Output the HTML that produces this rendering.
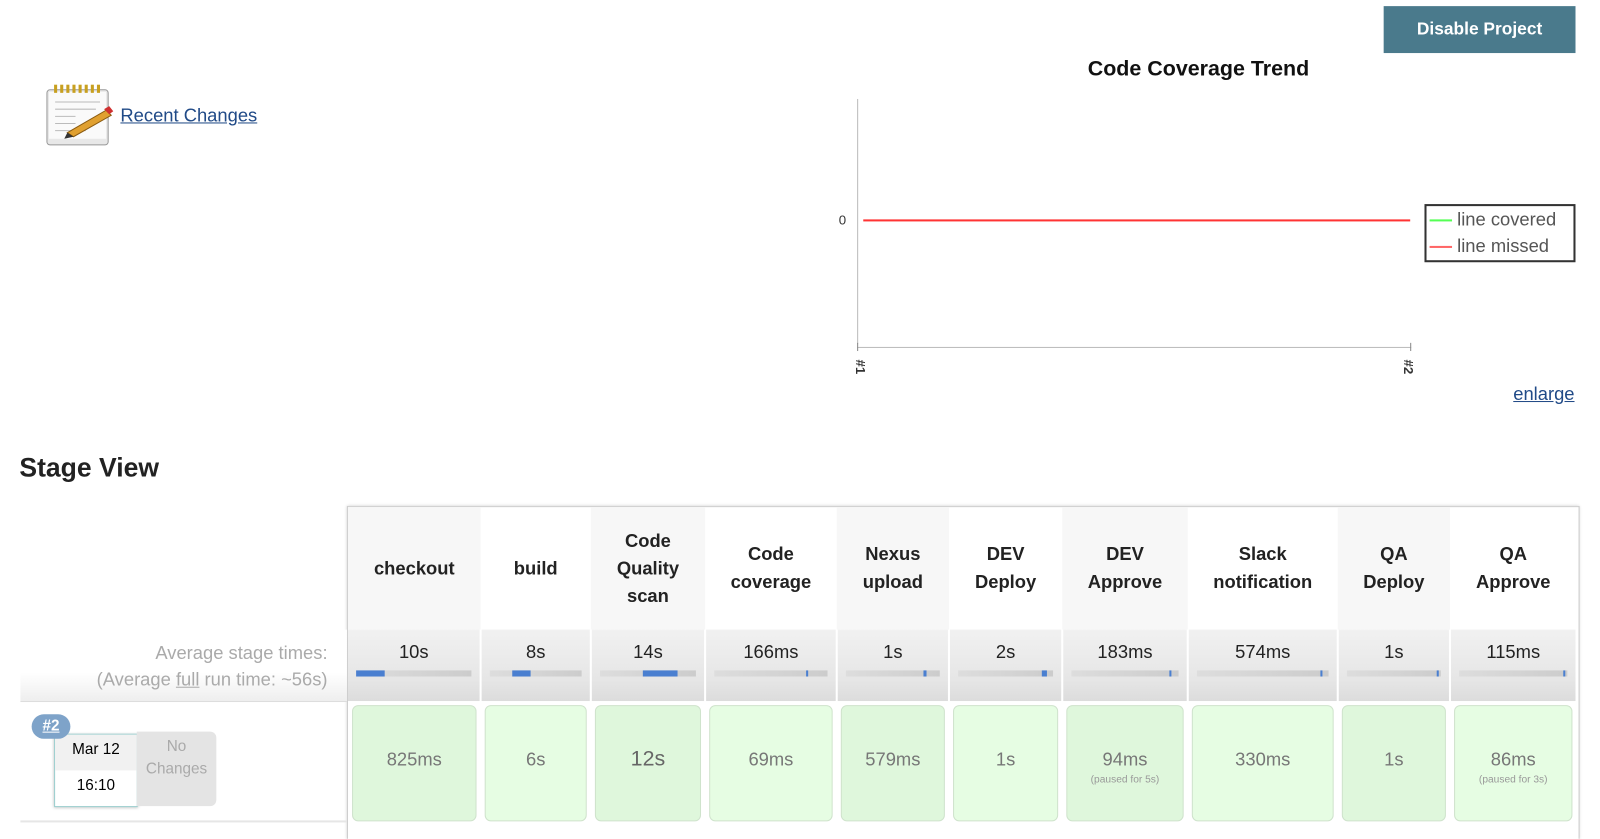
<!DOCTYPE html>
<html><head><style>
body{margin:0;width:1600px;height:821px;overflow:hidden;background:#fff;font-family:"Liberation Sans",Helvetica,Arial,sans-serif;position:relative}
#w{position:absolute;left:0;top:0;width:1568px;height:805px;transform:scale(1.0204);transform-origin:0 0}
.a{position:absolute}
.btn{left:1356px;top:6px;width:188px;height:46px;background:#4a7a8c;color:#fff;font-weight:bold;font-size:17px;line-height:46px;text-align:center}
a{color:#204a87;text-decoration:underline}
.hd{top:497px;height:120px;display:flex;align-items:center;justify-content:center;text-align:center;font-weight:bold;font-size:18px;line-height:27px;color:#222}
.av{top:617px;height:70px;background:linear-gradient(#f1f1f1,#e6e6e6 70%,#dcdcdc);text-align:center;font-size:18px;color:#222}
.av span{display:block;margin-top:12px}
.bar{position:absolute;left:8px;right:8px;top:40px;height:6px;background:linear-gradient(90deg,#ddd,#ccc)}
.bar i{position:absolute;top:0;height:6px;background:#4a7fd0}
.rw{top:687px;height:118px}
.c{position:absolute;left:4px;right:4px;top:4px;bottom:0;border:1px solid #cfe3cc;border-radius:6px;text-align:center;color:#777;font-size:18px}
.c b{font-weight:normal;display:block;margin-top:42px}
.c small{display:block;font-size:10px;color:#999;margin-top:4px}
</style></head><body><div id="w">
<div class="a btn">Disable Project</div>
<svg class="a" style="left:44px;top:80px" width="70" height="66" viewBox="0 0 70 66">
<rect x="2" y="8" width="60" height="54" rx="3" fill="#e8e8e8" stroke="#999"/>
<rect x="4" y="10" width="56" height="46" fill="#fafafa"/>
<g fill="#c8a020"><rect x="9" y="3" width="3" height="8"/><rect x="15" y="3" width="3" height="8"/><rect x="21" y="3" width="3" height="8"/><rect x="27" y="3" width="3" height="8"/><rect x="33" y="3" width="3" height="8"/><rect x="39" y="3" width="3" height="8"/><rect x="45" y="3" width="3" height="8"/><rect x="51" y="3" width="3" height="8"/></g>
<g stroke="#bbb"><line x1="10" y1="20" x2="54" y2="20"/><line x1="10" y1="27" x2="50" y2="27"/><line x1="10" y1="34" x2="30" y2="34"/><line x1="10" y1="41" x2="30" y2="41"/><line x1="10" y1="48" x2="40" y2="48"/></g>
<path d="M22 50 L60 28 L65 33 L28 54 Z" fill="#e0a030" stroke="#8a5a10"/>
<path d="M58 27 l5 -3 l4 5 l-4 3z" fill="#d03030"/>
<path d="M22 50 L28 54 L19 56Z" fill="#333"/>
</svg>
<a class="a" style="left:118px;top:103px;font-size:18px">Recent Changes</a>
<div class="a" style="left:1066px;top:56px;font-size:22px;color:#111;font-weight:bold;font-size:21px">Code Coverage Trend</div>
<div class="a" style="left:840px;top:97px;width:1px;height:240px;background:#bbb"></div>
<div class="a" style="left:840px;top:340px;width:543px;height:1px;background:#bbb"></div>
<div class="a" style="left:840px;top:336px;width:1px;height:8px;background:#888"></div>
<div class="a" style="left:1382px;top:336px;width:1px;height:8px;background:#888"></div>
<div class="a" style="left:846px;top:215px;width:536px;height:2px;background:#f33"></div>
<div class="a" style="left:822px;top:208px;font-size:13px;color:#333">0</div>
<div class="a" style="left:836px;top:352px;font-size:13px;font-weight:bold;color:#333;transform:rotate(90deg)">#1</div>
<div class="a" style="left:1373px;top:352px;font-size:13px;font-weight:bold;color:#333;transform:rotate(90deg)">#2</div>
<div class="a" style="left:1396px;top:200px;width:148px;height:57px;border:2px solid #333;box-sizing:border-box;font-size:18px;color:#555;line-height:26px;padding-left:3px">
<div><span style="display:inline-block;width:22px;height:2px;background:#5f5;vertical-align:middle;margin-right:5px"></span>line covered</div>
<div><span style="display:inline-block;width:22px;height:2px;background:#f66;vertical-align:middle;margin-right:5px"></span>line missed</div></div>
<a class="a" style="left:1483px;top:376px;font-size:18px">enlarge</a>
<div class="a" style="left:19px;top:443px;font-size:26px;font-weight:bold;color:#222">Stage View</div>
<div class="a" style="left:340px;top:496px;width:1206px;height:325px;border:1px solid #ccc;border-bottom:none;box-shadow:0 0 3px #ccc"></div>
<div class="a" style="left:20px;top:617px;width:320px;height:70px;background:linear-gradient(#fff,#fff 60%,#eee);text-align:right;color:#aaa;font-size:18px;line-height:26px;box-sizing:border-box;padding-right:19px;padding-top:10px">Average stage times:<br>(Average <u>full</u> run time: ~56s)</div>
<div class="a" style="left:20px;top:687px;width:320px;height:116px;border-top:1px solid #ddd;border-bottom:2px solid #e6e6e6"></div>
<div class="a" style="left:53px;top:719px;width:80px;height:70px;border:1px solid #9cc;background:#fff;box-shadow:0 1px 3px #bbb">
<div style="height:35px;background:#f1f1f1;text-align:center;line-height:30px;font-size:15px">Mar 12</div>
<div style="text-align:center;font-size:15px;line-height:30px">16:10</div></div>
<div class="a" style="left:134px;top:717px;width:78px;height:73px;background:#e4e4e4;border-radius:0 6px 6px 0;text-align:center;color:#aaa;font-size:15px;line-height:22px;padding-top:4px;box-sizing:border-box">No<br>Changes</div>
<div class="a" style="left:31px;top:700px;width:38px;height:24px;border-radius:12px;background:#7ea3c9;color:#fff;font-weight:bold;font-size:15px;text-align:center;line-height:24px;text-decoration:underline">#2</div>

<div class="a hd" style="left:341px;width:130px;background:#f7f7f7">checkout</div>
<div class="a hd" style="left:471px;width:108px">build</div>
<div class="a hd" style="left:579px;width:112px;background:#f7f7f7">Code<br>Quality<br>scan</div>
<div class="a hd" style="left:691px;width:129px">Code<br>coverage</div>
<div class="a hd" style="left:820px;width:110px;background:#f7f7f7">Nexus<br>upload</div>
<div class="a hd" style="left:930px;width:111px">DEV<br>Deploy</div>
<div class="a hd" style="left:1041px;width:123px;background:#f7f7f7">DEV<br>Approve</div>
<div class="a hd" style="left:1164px;width:147px">Slack<br>notification</div>
<div class="a hd" style="left:1311px;width:110px;background:#f7f7f7">QA<br>Deploy</div>
<div class="a hd" style="left:1421px;width:124px">QA<br>Approve</div>

<div class="a av" style="left:341px;width:129px"><span>10s</span><div class="bar"><i style="left:0;width:28px"></i></div></div>
<div class="a av" style="left:472px;width:106px"><span>8s</span><div class="bar"><i style="left:22px;width:18px"></i></div></div>
<div class="a av" style="left:580px;width:110px"><span>14s</span><div class="bar"><i style="left:42px;width:34px"></i></div></div>
<div class="a av" style="left:692px;width:127px"><span>166ms</span><div class="bar"><i style="left:90px;width:2px"></i></div></div>
<div class="a av" style="left:821px;width:108px"><span>1s</span><div class="bar"><i style="left:76px;width:3px"></i></div></div>
<div class="a av" style="left:931px;width:109px"><span>2s</span><div class="bar"><i style="left:82px;width:5px"></i></div></div>
<div class="a av" style="left:1042px;width:121px"><span>183ms</span><div class="bar"><i style="left:96px;width:2px"></i></div></div>
<div class="a av" style="left:1165px;width:145px"><span>574ms</span><div class="bar"><i style="left:121px;width:2px"></i></div></div>
<div class="a av" style="left:1312px;width:108px"><span>1s</span><div class="bar"><i style="left:88px;width:2px"></i></div></div>
<div class="a av" style="left:1422px;width:122px"><span>115ms</span><div class="bar"><i style="left:102px;width:2px"></i></div></div>

<div class="a rw" style="left:341px;width:130px"><div class="c" style="background:#dff7dc"><b>825ms</b></div></div>
<div class="a rw" style="left:471px;width:108px"><div class="c" style="background:#e6fde3"><b>6s</b></div></div>
<div class="a rw" style="left:579px;width:112px"><div class="c" style="background:#dff7dc;font-size:21px;color:#666"><b style="margin-top:40px">12s</b></div></div>
<div class="a rw" style="left:691px;width:129px"><div class="c" style="background:#e6fde3"><b>69ms</b></div></div>
<div class="a rw" style="left:820px;width:110px"><div class="c" style="background:#dff7dc"><b>579ms</b></div></div>
<div class="a rw" style="left:930px;width:111px"><div class="c" style="background:#e6fde3"><b>1s</b></div></div>
<div class="a rw" style="left:1041px;width:123px"><div class="c" style="background:#dff7dc"><b>94ms</b><small>(paused for 5s)</small></div></div>
<div class="a rw" style="left:1164px;width:147px"><div class="c" style="background:#e6fde3"><b>330ms</b></div></div>
<div class="a rw" style="left:1311px;width:110px"><div class="c" style="background:#dff7dc"><b>1s</b></div></div>
<div class="a rw" style="left:1421px;width:124px"><div class="c" style="background:#e6fde3"><b>86ms</b><small>(paused for 3s)</small></div></div>
</div></body></html>
